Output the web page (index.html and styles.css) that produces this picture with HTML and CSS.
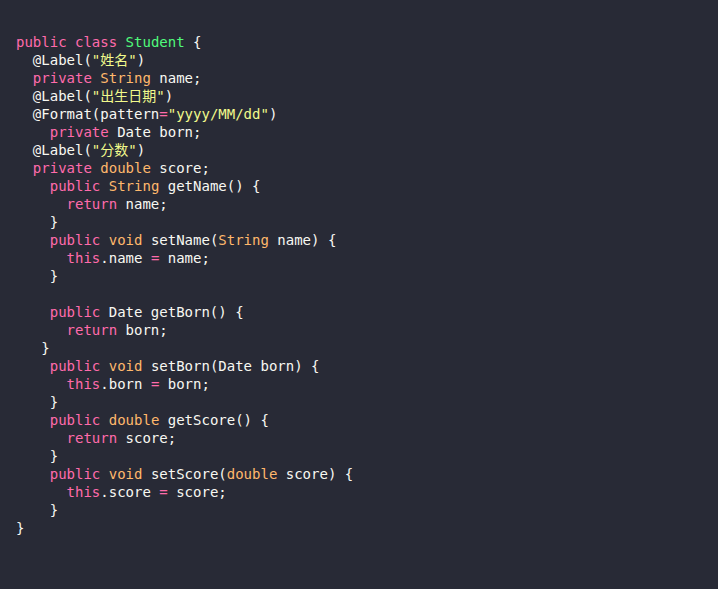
FILE: index.html
```html
<!DOCTYPE html>
<html>
<head>
<meta charset="utf-8">
<link rel="stylesheet" href="styles.css">
</head>
<body>
<pre class="code"><span class="k">public</span> <span class="k">class</span> <span class="t">Student</span> {
  @Label(<span class="s">"姓名"</span>)
  <span class="k">private</span> <span class="ty">String</span> name;
  @Label(<span class="s">"出生日期"</span>)
  @Format(pattern<span class="k">=</span><span class="s">"yyyy/MM/dd"</span>)
    <span class="k">private</span> Date born;
  @Label(<span class="s">"分数"</span>)
  <span class="k">private</span> <span class="ty">double</span> score;
    <span class="k">public</span> <span class="ty">String</span> getName() {
      <span class="k">return</span> name;
    }
    <span class="k">public</span> <span class="ty">void</span> setName(<span class="ty">String</span> name) {
      <span class="k">this</span>.name <span class="k">=</span> name;
    }

    <span class="k">public</span> Date getBorn() {
      <span class="k">return</span> born;
   }
    <span class="k">public</span> <span class="ty">void</span> setBorn(Date born) {
      <span class="k">this</span>.born <span class="k">=</span> born;
    }
    <span class="k">public</span> <span class="ty">double</span> getScore() {
      <span class="k">return</span> score;
    }
    <span class="k">public</span> <span class="ty">void</span> setScore(<span class="ty">double</span> score) {
      <span class="k">this</span>.score <span class="k">=</span> score;
    }
}</pre>
</body>
</html>
```
FILE: styles.css
```css
html, body {
  margin: 0;
  padding: 0;
  background: #282a36;
  height: 100%;
}
.code {
  margin: 0;
  padding: 33px 16px 0 16px;
  font-family: "DejaVu Sans Mono", "Noto Sans CJK SC", monospace;
  font-size: 14px;
  line-height: 18px;
  color: #f8f8f2;
}
.k { color: #ff6bab; }
.t { color: #50fa7b; }
.ty { color: #ffb86c; }
.s { color: #f1fa8c; }
```
